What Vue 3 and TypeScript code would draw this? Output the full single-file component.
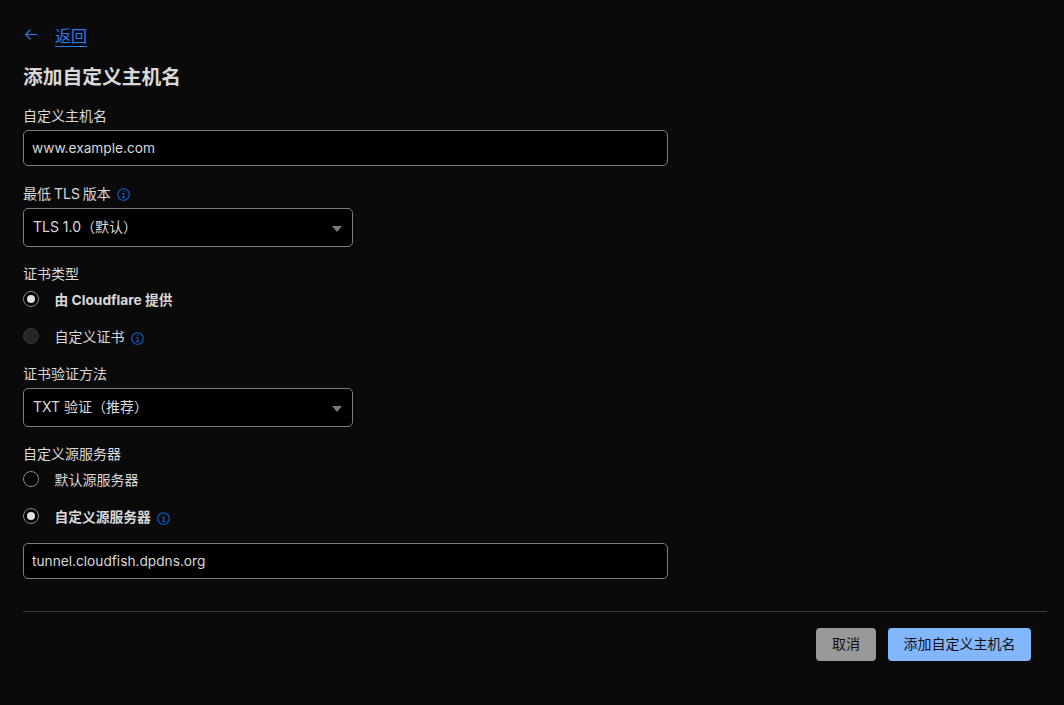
<script setup lang="ts">
const certOptions = [
  { label: '由 Cloudflare 提供', checked: true, disabled: false, info: false },
  { label: '自定义证书', checked: false, disabled: true, info: true },
]
const originOptions = [
  { label: '默认源服务器', checked: false, disabled: false, info: false },
  { label: '自定义源服务器', checked: true, disabled: false, info: true },
]
</script>

<template>
  <div class="page">
    <div class="back">
      <svg class="back-icon" width="16" height="16" viewBox="0 0 16 16" fill="none">
        <path d="M14 6.5H2.8M7.6 1.5 2.6 6.5l5 5" stroke="#2f7bea" stroke-width="1.1" />
      </svg>
      <a class="back-link">返回</a>
    </div>
    <h1>添加自定义主机名</h1>

    <label class="label first">自定义主机名</label>
    <div class="input">www.example.com</div>

    <label class="label tls">
      <span class="tight">最低 TLS 版本</span>
      <svg class="info" width="13" height="13" viewBox="0 0 14 14" fill="none">
        <circle cx="7" cy="7" r="6.2" stroke="#0b62d6" stroke-width="1.2" />
        <path d="M5.6 6h1.7v4M5.4 10.3h3.3M6.6 3.6h1.2" stroke="#0b62d6" stroke-width="1.1" />
      </svg>
    </label>
    <div class="select"><span>TLS 1.0（默认）</span><i class="caret"></i></div>

    <label class="label cert">证书类型</label>
    <div class="radios">
      <div v-for="o in certOptions" :key="o.label" class="radio-row">
        <span class="radio" :class="{ on: o.checked, off: o.disabled }"></span>
        <span class="radio-text" :class="{ bold: o.checked }">{{ o.label }}</span>
        <svg v-if="o.info" class="info" width="13" height="13" viewBox="0 0 14 14" fill="none">
          <circle cx="7" cy="7" r="6.2" stroke="#0b62d6" stroke-width="1.2" />
          <path d="M5.6 6h1.7v4M5.4 10.3h3.3M6.6 3.6h1.2" stroke="#0b62d6" stroke-width="1.1" />
        </svg>
      </div>
    </div>

    <label class="label verify">证书验证方法</label>
    <div class="select"><span>TXT 验证（推荐）</span><i class="caret"></i></div>

    <label class="label origin">自定义源服务器</label>
    <div class="radios">
      <div v-for="o in originOptions" :key="o.label" class="radio-row">
        <span class="radio" :class="{ on: o.checked, off: o.disabled }"></span>
        <span class="radio-text" :class="{ bold: o.checked }">{{ o.label }}</span>
        <svg v-if="o.info" class="info" width="13" height="13" viewBox="0 0 14 14" fill="none">
          <circle cx="7" cy="7" r="6.2" stroke="#0b62d6" stroke-width="1.2" />
          <path d="M5.6 6h1.7v4M5.4 10.3h3.3M6.6 3.6h1.2" stroke="#0b62d6" stroke-width="1.1" />
        </svg>
      </div>
    </div>
    <div class="input origin-input">tunnel.cloudfish.dpdns.org</div>

    <div class="footer">
      <button class="btn cancel">取消</button>
      <button class="btn primary">添加自定义主机名</button>
    </div>
  </div>
</template>

<style>
html,
body {
  background: #0a0a0a;
}
</style>

<style scoped>
.page {
  box-sizing: border-box;
  height: 705px;
  padding: 26px 17px 0 23px;
  background: #0a0a0a;
  color: #d9d9d9;
  font-family: Inter, 'Noto Sans CJK SC', sans-serif;
  font-size: 14px;
  overflow: hidden;
}

.back {
  display: flex;
  align-items: flex-start;
  height: 22px;
}

.back-icon {
  flex-shrink: 0;
  margin-top: 2px;
}

.back-link {
  margin-left: 16px;
  line-height: 20px;
  color: #2f7bea;
  font-size: 16px;
  border-bottom: 1px solid #2f7bea;
}

h1 {
  margin: 16px 0 0;
  font-size: 19.75px;
  line-height: 26px;
  font-weight: 700;
  color: #d9d9d9;
}

.label {
  box-sizing: border-box;
  display: flex;
  align-items: center;
  height: 20px;
  padding-bottom: 2px;
}

.tight {
  word-spacing: -1px;
}

.label.first {
  margin-top: 16px;
}

.label.tls {
  margin-top: 18px;
}

.label.cert {
  margin-top: 17px;
}

.label.verify {
  margin-top: 16px;
}

.label.origin {
  margin-top: 17px;
}

.info {
  margin-left: 6px;
  margin-top: 2px;
  flex-shrink: 0;
}

.input {
  box-sizing: border-box;
  width: 645px;
  height: 36px;
  margin-top: 4px;
  padding: 0 8px;
  display: flex;
  align-items: center;
  font-size: 13.7px;
  background: #000;
  border: 1px solid #7d7d7d;
  border-radius: 5px;
}

.origin-input {
  margin-top: 15px;
}

.select {
  box-sizing: border-box;
  width: 330px;
  height: 39px;
  margin-top: 4px;
  padding: 0 10px 3px 9px;
  display: flex;
  align-items: center;
  justify-content: space-between;
  background: #000;
  border: 1px solid #7d7d7d;
  border-radius: 5px;
}

.caret {
  width: 0;
  height: 0;
  margin-top: 5px;
  border-left: 5px solid transparent;
  border-right: 5px solid transparent;
  border-top: 6px solid #7a7a7a;
}

.radios {
  display: flex;
  flex-direction: column;
  gap: 15px;
  margin-top: 5px;
}

.radio-row {
  display: flex;
  align-items: center;
  height: 22px;
}

.radio {
  box-sizing: border-box;
  width: 16px;
  height: 16px;
  margin-top: -2px;
  margin-right: 16px;
  border: 1px solid #8a8a8a;
  border-radius: 50%;
  background: #000;
  display: flex;
  align-items: center;
  justify-content: center;
  flex-shrink: 0;
}

.radio.on::after {
  content: '';
  width: 8px;
  height: 8px;
  border-radius: 50%;
  background: #e0e0e0;
}

.radio.off {
  background: #262626;
  border-color: #3a3a3a;
}

.radio-text {
  margin-top: -2px;
  margin-left: -0.5px;
}

.radio-text.bold {
  font-size: 13.75px;
  font-weight: 700;
}

.footer {
  margin-top: 32px;
  padding: 16px 16px 0 0;
  display: flex;
  justify-content: flex-end;
  gap: 12px;
  border-top: 1px solid #3a3a3a;
}

.btn {
  height: 33px;
  border: none;
  border-radius: 4px;
  font-family: inherit;
  font-size: 14px;
  color: #111;
  padding: 0 0 3px;
}

.cancel {
  background: #999;
  width: 60px;
}

.primary {
  background: #82b6ff;
  width: 143px;
}
</style>
